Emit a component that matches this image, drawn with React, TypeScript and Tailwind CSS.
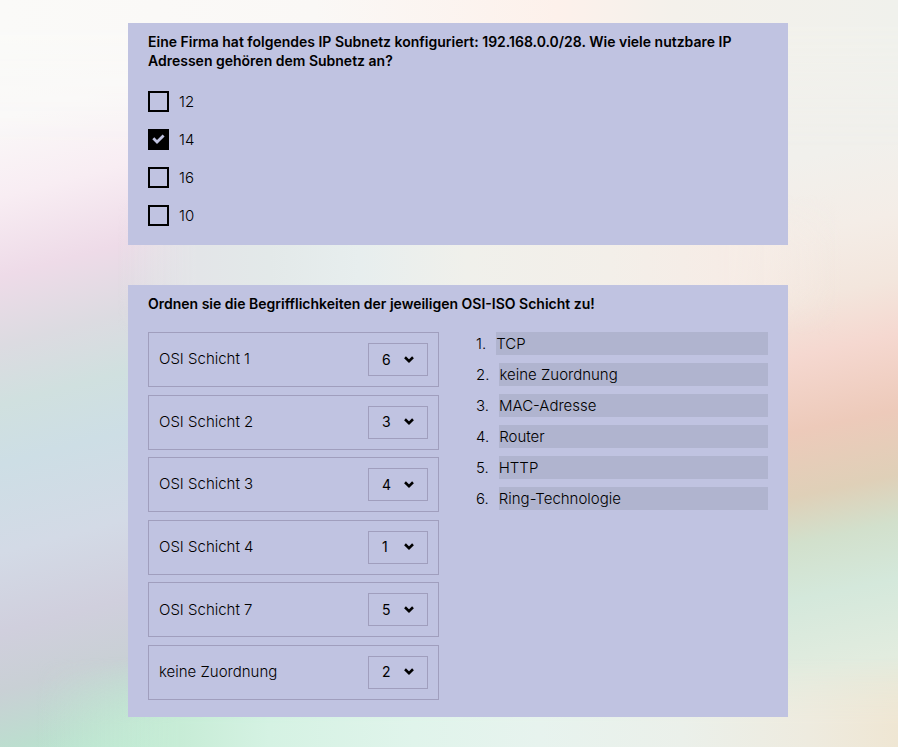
import { useState } from "react";

const answers = ["12", "14", "16", "10"];

const layers = [
  { label: "OSI Schicht 1", value: "6" },
  { label: "OSI Schicht 2", value: "3" },
  { label: "OSI Schicht 3", value: "4" },
  { label: "OSI Schicht 4", value: "1" },
  { label: "OSI Schicht 7", value: "5" },
  { label: "keine Zuordnung", value: "2" },
];

const terms = ["TCP", "keine Zuordnung", "MAC-Adresse", "Router", "HTTP", "Ring-Technologie"];

function Backdrop() {
  return (
    <div aria-hidden="true" className="pointer-events-none absolute inset-0 overflow-hidden">
      <div className="absolute inset-0 bg-[linear-gradient(168deg,#f1f1ed_20%,#f1f0ec_35%,#f4ede7_43%,#f3e6dd_50%,#f5d8d0_56%,#edcaba_64%,#dfd0b8_71%,#d2e0cc_76%,#d4e8db_82%,#e2ecdf_90%,#eee8d8_98%)]" />
      <div className="absolute inset-0 bg-[linear-gradient(165deg,#f9faf7_0%,#faf8f8_12%,#f8edf3_20%,#eedbe8_28%,#dcdbe1_35%,#d0e0df_41%,#cddee5_47%,#d3dae6_56%,#d0cfdd_64%,#c9d0d5_70%,#bcdecf_76%,#b9e9d1_80%,#d5f2e2_86%)] [mask-image:linear-gradient(to_right,black_14%,transparent_80%)]" />
      <div className="absolute inset-0 bg-[linear-gradient(to_right,#fafaf8_0%,#faf8f6_35%,#fdf1eb_62%,#f4f1eb_75%,#f0f1ec_100%)] [mask-image:linear-gradient(to_bottom,black_3%,transparent_20%)]" />
      <div className="absolute inset-0 bg-[linear-gradient(to_right,transparent_13%,#e3e5e8_22%,#e3e9e9_30%,#e7eeee_40%,#f0f0eb_52%,#f3efe9_68%,#f6ece6_80%,transparent_94%)] [mask-image:linear-gradient(to_bottom,transparent_26%,black_33%,black_38%,transparent_45%)]" />
      <div className="absolute inset-0 bg-[linear-gradient(to_right,transparent_4%,#c7ecd6_20%,#d5f2e3_30%,#e0f4eb_46%,#e7f3ee_60%,#ebf0ea_76%,#eeebdf_90%,#efe6d3_100%)] [mask-image:linear-gradient(to_bottom,transparent_88%,black_97%)]" />
    </div>
  );
}

function Checkbox({ label, defaultChecked }: { label: string; defaultChecked: boolean }) {
  const [checked, setChecked] = useState(defaultChecked);
  return (
    <label className="flex cursor-pointer items-center gap-2.5 font-light leading-[21px]">
      <span className="grid size-[21px]">
        <input
          type="checkbox"
          checked={checked}
          onChange={(event) => setChecked(event.target.checked)}
          className="col-start-1 row-start-1 size-full appearance-none border-2 border-black checked:bg-black"
        />
        {checked && (
          <svg viewBox="0 0 21 21" className="pointer-events-none col-start-1 row-start-1 size-full" aria-hidden="true">
            <path d="M5.3 9.3 9 13 15.6 6.4" fill="none" stroke="#c0c3e1" strokeWidth="2.8" />
          </svg>
        )}
      </span>
      {label}
    </label>
  );
}

function LayerSelect({ id, value }: { id: string; value: string }) {
  return (
    <span className="grid h-[33px] w-[60px]">
      <select
        id={id}
        defaultValue={value}
        className="col-start-1 row-start-1 appearance-none border border-[#a09ebd] pl-[13px] text-sm"
      >
        {layers.map((_, index) => (
          <option key={index}>{index + 1}</option>
        ))}
      </select>
      <svg
        viewBox="0 0 10 8"
        className="pointer-events-none col-start-1 row-start-1 mr-3.5 h-2 w-2.5 self-center justify-self-end"
        aria-hidden="true"
      >
        <path d="M1 1.3 5 5.1 9 1.3" fill="none" stroke="black" strokeWidth="2.6" />
      </svg>
    </span>
  );
}

export default function App() {
  return (
    <div className="relative min-h-screen pl-[18px] font-['Inter','Liberation_Sans',sans-serif] text-[15px] text-black">
      <Backdrop />
      <main className="relative mx-auto flex max-w-[660px] flex-col gap-10 pt-[23px] pb-[30px]">
        <fieldset className="bg-[#c0c3e1] px-5 pb-[19px]">
          <legend className="float-left mb-[21px] w-full pt-[9px] text-sm font-semibold leading-[19px]">
            Eine Firma hat folgendes IP Subnetz konfiguriert: 192.168.0.0/28. Wie viele nutzbare IP Adressen gehören dem
            Subnetz an?
          </legend>
          <div className="clear-both flex flex-col gap-[17px]">
            {answers.map((answer) => (
              <Checkbox key={answer} label={answer} defaultChecked={answer === "14"} />
            ))}
          </div>
        </fieldset>

        <section className="bg-[#c0c3e1] px-5 pt-[9px] pb-[17px]">
          <h2 className="text-sm font-semibold leading-[19px]">
            Ordnen sie die Begrifflichkeiten der jeweiligen OSI-ISO Schicht zu!
          </h2>
          <div className="mt-[19px] grid grid-cols-[291fr_292fr] gap-[37px]">
            <div className="flex min-h-[368px] flex-col justify-between">
              {layers.map(({ label, value }, index) => (
                <div
                  key={label}
                  className="flex h-[55px] items-center justify-between border border-[#a09ebd] px-2.5"
                >
                  <label htmlFor={`layer-${index}`} className="font-light">
                    {label}
                  </label>
                  <LayerSelect id={`layer-${index}`} value={value} />
                </div>
              ))}
            </div>
            <ol className="flex flex-col gap-2 font-light">
              {terms.map((term, index) => (
                <li key={term} className="flex gap-2.5 leading-[23px]">
                  <span>{index + 1}.</span>
                  <span className="flex-1 bg-[#b0b4cf]">{term}</span>
                </li>
              ))}
            </ol>
          </div>
        </section>
      </main>
    </div>
  );
}
